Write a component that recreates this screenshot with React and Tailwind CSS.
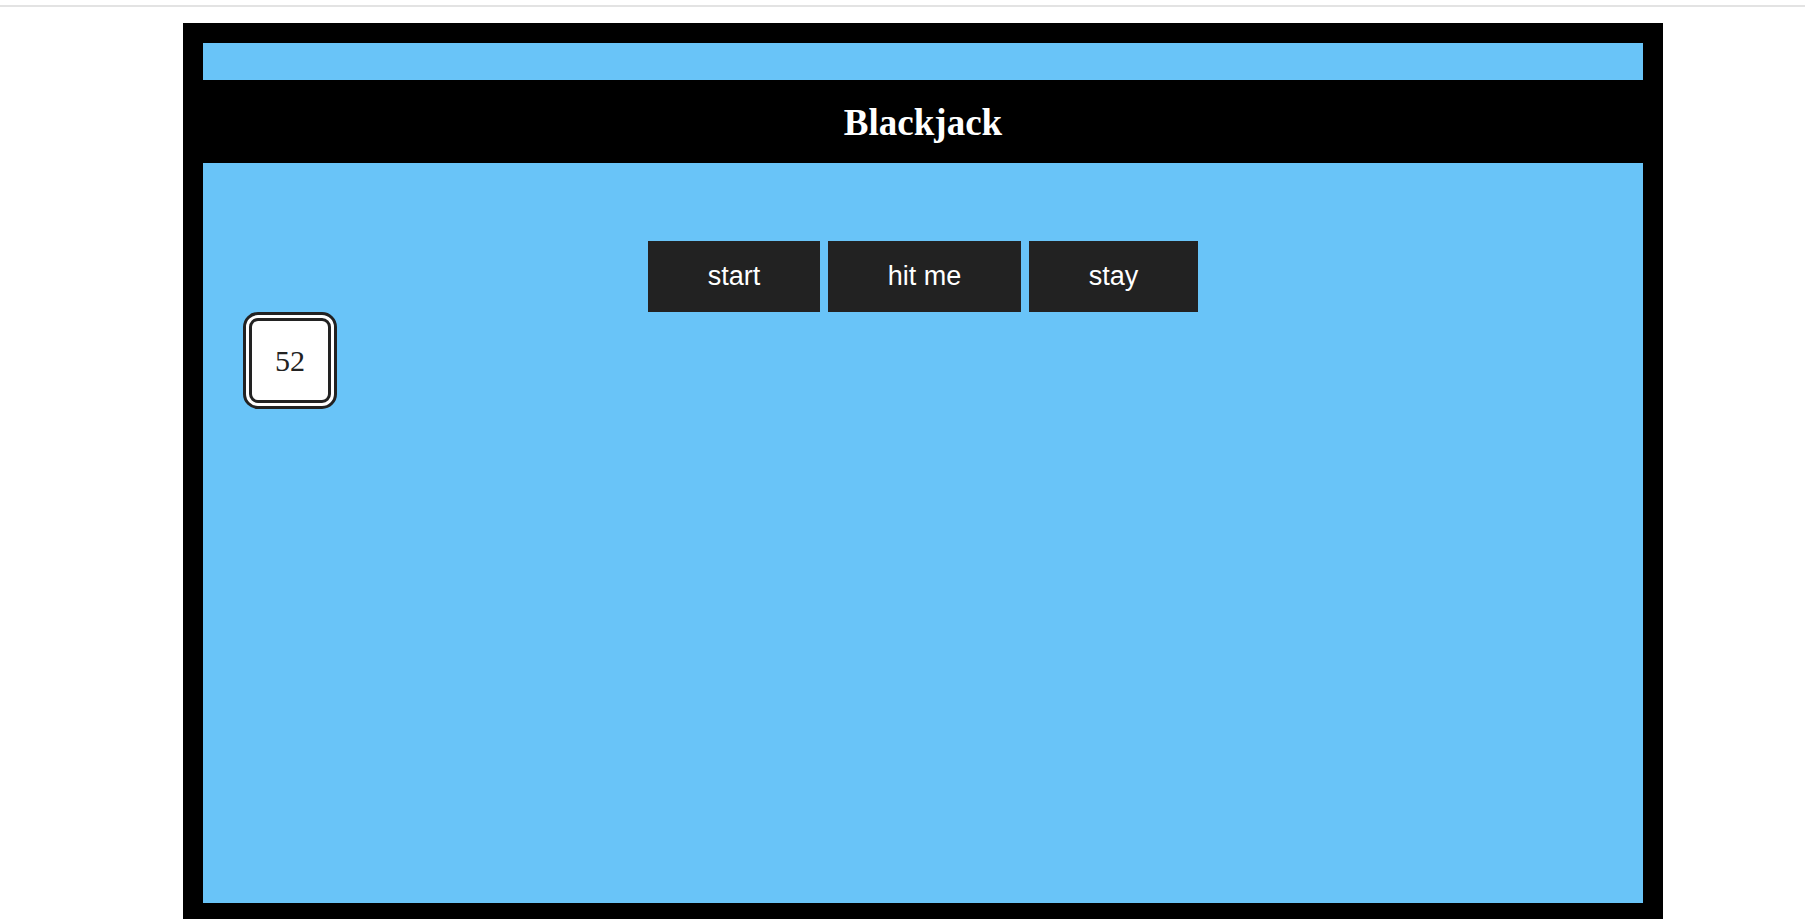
export default function App() {
  const buttons = [
    { label: "start", width: "w-[172px]" },
    { label: "hit me", width: "w-[193px]" },
    { label: "stay", width: "w-[169px]" },
  ];

  return (
    <div className="min-h-screen bg-white overflow-hidden">
      <div className="h-[5px]" />
      <div className="h-[2px] bg-[#e3e3e3]" />
      <div className="ml-[183px] mt-[16px] w-[1480px] border-[20px] border-black bg-black">
        <div className="h-[37px] bg-[#69c4f8]" />
        <div className="h-[83px] flex items-center justify-center bg-black">
          <h1 className="text-white text-[37px] font-bold font-['Liberation_Serif',serif] leading-none pt-[2px]">
            Blackjack
          </h1>
        </div>
        <div className="h-[740px] bg-[#69c4f8] pt-[78px]">
          <div className="flex justify-center gap-[8px]">
            {buttons.map((b) => (
              <button
                key={b.label}
                className={`${b.width} h-[71px] bg-[#222222] text-white text-[27px] font-['Liberation_Sans',Arial,sans-serif] leading-none`}
              >
                {b.label}
              </button>
            ))}
          </div>
          <div className="pl-[40px]">
            <div className="w-[94px] h-[97px] border-[9px] border-double border-[#222222] rounded-[15px] bg-white flex items-center justify-center">
              <span className="text-[30px] text-[#222222] font-['Liberation_Serif',serif] leading-none">
                52
              </span>
            </div>
          </div>
        </div>
      </div>
    </div>
  );
}
